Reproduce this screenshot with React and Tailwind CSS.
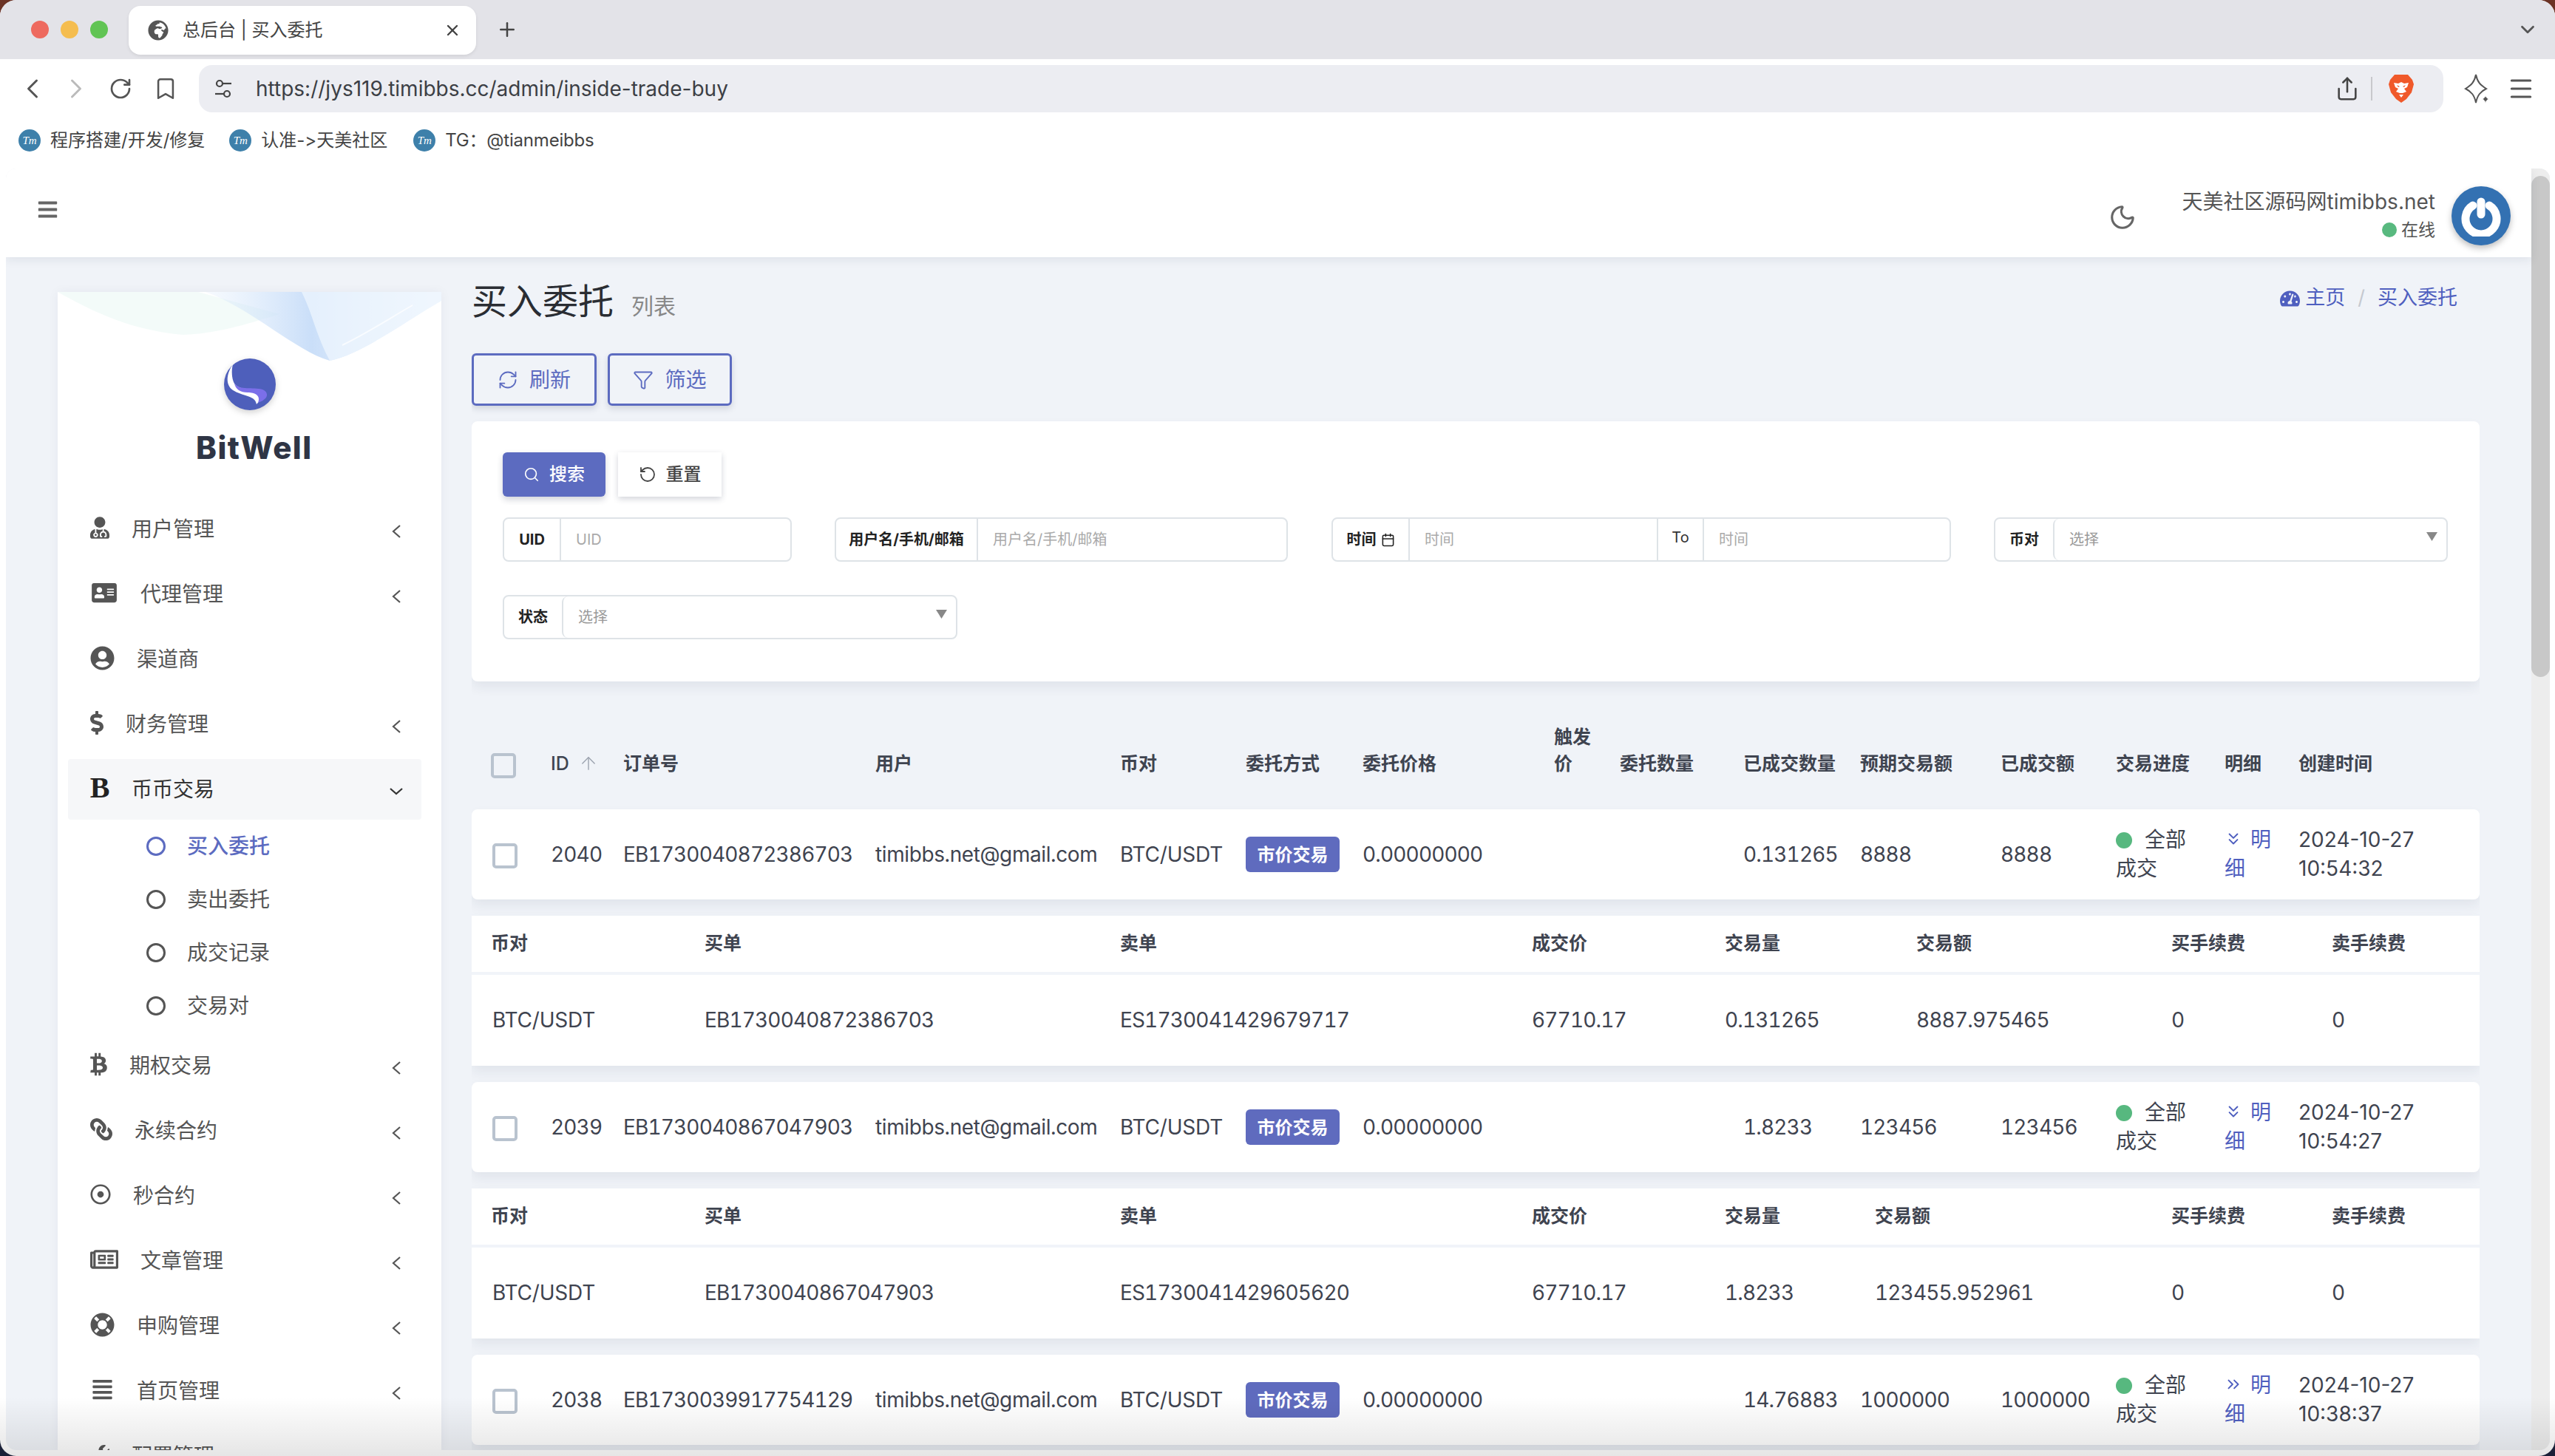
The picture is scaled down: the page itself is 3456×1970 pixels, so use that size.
import React from 'react';
import { ChevronLeft, ChevronRight, ChevronDown, RotateCw, Bookmark, Share, Menu, X, Plus, Moon, RefreshCw, Filter, Search, RotateCcw, Calendar, ArrowUp, ChevronsDown, ChevronsRight } from 'lucide-react';
import { FaUserMd, FaAddressCard, FaUserCircle, FaDollarSign, FaBtc, FaLink, FaRegDotCircle, FaRegNewspaper, FaLifeRing, FaAlignJustify, FaWrench, FaTachometerAlt, FaGlobeAfrica, FaBars } from 'react-icons/fa';

const rowCols = 'grid-cols-[107px_98px_341px_331px_170px_158px_259px_89px_167px_158px_190px_156px_147px_100px_245px]';
const detailA = 'grid-cols-[315px_562px_557px_261px_259px_345px_217px_200px]';
const detailB = 'grid-cols-[315px_562px_557px_261px_203px_401px_217px_200px]';

const orders = [
  { id: '2040', no: 'EB1730040872386703', filled: '0.131265', expect: '8888', total: '8888', date: '2024-10-27', time: '10:54:32', cols: detailA, sell: 'ES1730041429679717', price: '67710.17', vol: '0.131265', amount: '8887.975465' },
  { id: '2039', no: 'EB1730040867047903', filled: '1.8233', expect: '123456', total: '123456', date: '2024-10-27', time: '10:54:27', cols: detailB, sell: 'ES1730041429605620', price: '67710.17', vol: '1.8233', amount: '123455.952961' },
  { id: '2038', no: 'EB1730039917754129', filled: '14.76883', expect: '1000000', total: '1000000', date: '2024-10-27', time: '10:38:37', right: true },
];

const menu = [
  { icon: <FaUserMd className="w-[26px] h-[30px]" />, label: '用户管理', more: true },
  { icon: <FaAddressCard className="w-[38px] h-[30px]" />, label: '代理管理', more: true },
  { icon: <FaUserCircle className="w-[33px] h-[33px]" />, label: '渠道商' },
  { icon: <FaDollarSign className="w-[18px] h-[34px]" />, label: '财务管理', more: true },
];
const menu2 = [
  { icon: <FaBtc className="w-[23px] h-[32px]" />, label: '期权交易' },
  { icon: <FaLink className="w-[30px] h-[30px] -scale-x-100" />, label: '永续合约' },
  { icon: <FaRegDotCircle className="w-[28px] h-[28px]" />, label: '秒合约' },
  { icon: <FaRegNewspaper className="w-[38px] h-[34px]" />, label: '文章管理' },
  { icon: <FaLifeRing className="w-[33px] h-[33px]" />, label: '申购管理' },
  { icon: <FaAlignJustify className="w-[33px] h-[30px]" />, label: '首页管理' },
  { icon: <FaWrench className="w-[26px] h-[30px]" />, label: '配置管理' },
];

function Caret() {
  return (
    <svg width="14" height="20" viewBox="0 0 14 20" fill="none" stroke="#555" strokeWidth="2.2" className="mt-[6px]">
      <path d="M12 2 L3 10 L12 18" />
    </svg>
  );
}

function MenuItem({ icon, label, more, active }) {
  return (
    <div className={`h-[82px] mb-[6px] ml-[14px] mr-[27px] pl-[30px] pr-[27px] flex items-center rounded-[4px] ${active ? 'bg-[#f6f7f9] text-[#333]' : 'text-[#555]'}`}>
      <span className="flex shrink-0 -mt-[4px]">{icon}</span>
      <span className="ml-[30px] text-[28px] leading-[40px] flex-1">{label}</span>
      {active ? (
        <svg width="20" height="12" viewBox="0 0 20 12" fill="none" stroke="#333" strokeWidth="2.2" className="mt-[6px] -mr-[3px]"><path d="M2 2 L10 9 L18 2" /></svg>
      ) : more !== false ? <Caret /> : null}
    </div>
  );
}

function SubItem({ label, active }) {
  return (
    <div className={`h-[72px] flex items-center pl-[120px] text-[28px] ${active ? 'text-[#5c6bc0] font-medium' : 'text-[#555]'}`}>
      <span className={`w-[26px] h-[26px] rounded-full border-[3px] ${active ? 'border-[#5c6bc0]' : 'border-[#555]'}`} />
      <span className="ml-[29px]">{label}</span>
    </div>
  );
}

function BmIcon() {
  return (
    <span className="w-[30px] h-[30px] rounded-full bg-[#3e80aa] text-white text-[15px] italic font-['Liberation_Serif',serif] flex items-center justify-center">Tm</span>
  );
}

function Group({ label, w, labelW, children, className = '' }) {
  return (
    <div className={`flex h-[60px] border-2 border-[#dee3e7] rounded-[8px] ${className}`} style={{ width: w }}>
      <div className="flex items-center justify-center shrink-0 text-[20px] font-bold text-[#222]" style={{ width: labelW }}>{label}</div>
      {children}
    </div>
  );
}

function TextField({ placeholder, className = '' }) {
  return (
    <input readOnly placeholder={placeholder} className={`min-w-0 flex-1 border-l-2 border-[#dee3e7] pl-[20px] text-[20px] outline-none placeholder:text-[#aaa] bg-transparent ${className}`} />
  );
}

function SelectField() {
  return (
    <div className="flex-1 flex items-center justify-between rounded-[8px] border-l-2 border-[#dee3e7] pl-[20px] pr-[12px] text-[20px] text-[#999]">
      <span>选择</span>
      <svg width="15" height="12" viewBox="0 0 15 12" className="-mt-[8px]"><path d="M0 0 H15 L7.5 12 Z" fill="#888" /></svg>
    </div>
  );
}

function CheckBox({ className = '' }) {
  return <span className={`block w-[34px] h-[34px] rounded-[5px] border-[4px] border-[#b9c3cf] ${className}`} />;
}

function OrderRow({ o }) {
  return (
    <div className={`grid ${rowCols} h-[122px] items-center bg-white rounded-[8px] shadow-[0_8px_16px_rgba(30,40,70,0.07)] text-[28px] leading-[39px] text-[#3f4450] whitespace-nowrap tabular-nums tracking-[-0.85px]`}>
      <div className="pl-[28px] pt-[3px]"><CheckBox /></div>
      <div>{o.id}</div>
      <div>{o.no}</div>
      <div className="tracking-[-0.4px]">timibbs.net@gmail.com</div>
      <div className="tracking-[-0.2px]">BTC/USDT</div>
      <div><span className="inline-flex items-center justify-center w-[127px] h-[48px] rounded-[6px] bg-[#5f6bbe] text-white text-[24px] font-bold tracking-normal">市价交易</span></div>
      <div>0.00000000</div>
      <div />
      <div />
      <div>{o.filled}</div>
      <div>{o.expect}</div>
      <div>{o.total}</div>
      <div className="w-[115px] whitespace-normal tracking-normal"><span className="inline-block w-[22px] h-[22px] rounded-full bg-[#57b87f] mr-[17px] align-[-2px]" />全部成交</div>
      <div className="w-[70px] whitespace-normal text-[#4f5fbf] tracking-normal">
        {o.right
          ? <ChevronsRight size={26} strokeWidth={1.8} className="inline-block mr-[10px] -ml-[1px] align-[-2px]" />
          : <ChevronsDown size={26} strokeWidth={1.8} className="inline-block mr-[10px] -ml-[1px] align-[-2px]" />}
        明细
      </div>
      <div className="normal-nums tracking-normal">{o.date}<br />{o.time}</div>
    </div>
  );
}

function DetailCard({ o }) {
  return (
    <div className="bg-white shadow-[0_8px_16px_rgba(30,40,70,0.07)] text-[#3f4450] whitespace-nowrap">
      <div className={`grid ${o.cols} h-[76px] items-center text-[25px] font-semibold`}>
        <div className="pl-[26px]">币对</div>
        <div>买单</div>
        <div>卖单</div>
        <div>成交价</div>
        <div>交易量</div>
        <div>交易额</div>
        <div>买手续费</div>
        <div>卖手续费</div>
      </div>
      <div className={`grid ${o.cols} h-[127px] pb-[2px] items-center border-t-4 border-[#f1f4f9] text-[28px] tabular-nums tracking-[-0.85px]`}>
        <div className="pl-[28px] tracking-[-0.2px]">BTC/USDT</div>
        <div>{o.no}</div>
        <div>{o.sell}</div>
        <div>{o.price}</div>
        <div>{o.vol}</div>
        <div>{o.amount}</div>
        <div>0</div>
        <div>0</div>
      </div>
    </div>
  );
}

function Sidebar() {
  return (
    <aside className="w-[519px] shrink-0 ml-[70px] mt-[47px] bg-white shadow-[0_0_14px_rgba(30,40,70,0.05)] overflow-hidden">
      <div className="relative h-[280px]">
        <svg width="519" height="100" viewBox="0 0 519 100" className="absolute top-0 left-0">
          <defs>
            <linearGradient id="waveBlue" x1="0" y1="0" x2="1" y2="0">
              <stop offset="0" stopColor="#d5e6fa" stopOpacity="0.2" />
              <stop offset="0.45" stopColor="#c4dbf8" stopOpacity="0.9" />
              <stop offset="1" stopColor="#dfecfb" stopOpacity="0.35" />
            </linearGradient>
          </defs>
          <path d="M0 0 C50 28 100 52 170 58 C220 56 260 42 300 30 L190 0 Z" fill="#eefaf6" opacity="0.7" />
          <path d="M200 0 C262 22 322 80 368 93 C410 85 470 40 519 12 L519 0 Z" fill="url(#waveBlue)" />
          <path d="M330 0 C345 30 350 60 368 93 C410 85 470 40 519 12 L519 0 Z" fill="#eef5fd" opacity="0.75" />
          <path d="M385 72 C420 55 450 35 480 18" stroke="#ffffff" strokeWidth="2" fill="none" opacity="0.7" />
        </svg>
        <svg width="70" height="70" viewBox="0 0 70 70" className="absolute left-[225px] top-[90px] drop-shadow-[0_3px_4px_rgba(0,0,0,0.18)]">
          <circle cx="35" cy="35" r="35" fill="#4e5fbb" />
          <path d="M12 8 C2 22 2 38 14 44 C28 52 42 50 44 62 C50 56 52 52 48 48 C38 40 22 44 14 34 C10 26 10 16 12 8 Z" fill="#ffffff" />
          <path d="M14 34 C22 44 38 38 52 42 C58 44 60 50 56 54 C52 58 50 58 46 60 C50 50 42 46 32 46 C22 46 16 42 14 34 Z" fill="#7b6fe9" />
        </svg>
        <div className="absolute left-[187px] top-[186px] text-[42px] leading-[50px] font-extrabold text-[#2f3545] tracking-[1.5px]">BitWell</div>
      </div>
      {menu.map((m) => <MenuItem key={m.label} {...m} more={m.more === true} />)}
      <MenuItem icon={<span className="w-[26px] h-[30px] flex items-center justify-center text-[40px] font-bold font-['Liberation_Serif',serif] text-[#222]">B</span>} label="币币交易" active />
      <div className="-mt-[6px] mb-[4px]">
        <SubItem label="买入委托" active />
        <SubItem label="卖出委托" />
        <SubItem label="成交记录" />
        <SubItem label="交易对" />
      </div>
      {menu2.map((m) => <MenuItem key={m.label} {...m} more />)}
    </aside>
  );
}

function Main() {
  return (
    <main className="w-[2716px] shrink-0 ml-[41px] overflow-hidden">
      <div className="flex items-center justify-between pt-[30px]">
        <div className="flex items-end">
          <h1 className="text-[48px] leading-[60px] text-[#2a2d33]">买入委托</h1>
          <span className="ml-[24px] mb-[4px] text-[30px] leading-[40px] text-[#888]">列表</span>
        </div>
        <div className="flex items-center pr-[30px] -mt-[9px] text-[27px] text-[#4f5fbf]">
          <FaTachometerAlt className="w-[27px] h-[24px]" />
          <span className="ml-[7px]">主页</span>
          <span className="mx-[17px] text-[#c5c9d0]">/</span>
          <span>买入委托</span>
        </div>
      </div>
      <div className="flex gap-[15px] mt-[40px]">
        <button className="flex items-center justify-center gap-[15px] w-[169px] h-[71px] border-[3px] border-[#5c6bc0] rounded-[6px] text-[28px] text-[#5c6bc0] shadow-[0_4px_8px_rgba(30,40,70,0.15)]"><RefreshCw size={28} strokeWidth={1.6} />刷新</button>
        <button className="flex items-center justify-center gap-[15px] w-[168px] h-[71px] border-[3px] border-[#5c6bc0] rounded-[6px] text-[28px] text-[#5c6bc0] shadow-[0_4px_8px_rgba(30,40,70,0.15)]"><Filter size={28} strokeWidth={1.6} />筛选</button>
      </div>
      <section className="mt-[21px] h-[352px] bg-white rounded-[8px] pl-[42px] pt-[42px] shadow-[0_8px_16px_rgba(30,40,70,0.07)]">
        <div className="flex gap-[17px]">
          <button className="flex items-center justify-center gap-[13px] w-[139px] h-[60px] rounded-[6px] bg-[#5c6bc0] text-white text-[24px] font-medium shadow-[0_4px_8px_rgba(30,40,70,0.2)]"><Search size={22} strokeWidth={1.8} />搜索</button>
          <button className="flex items-center justify-center gap-[13px] w-[140px] h-[60px] bg-white text-[#444] text-[24px] font-medium shadow-[0_3px_8px_rgba(30,40,70,0.2)]"><RotateCcw size={24} strokeWidth={1.8} />重置</button>
        </div>
        <div className="flex mt-[28px]">
          <Group label="UID" w={391} labelW={75}><TextField placeholder="UID" /></Group>
          <Group label="用户名/手机/邮箱" w={613} labelW={190} className="ml-[58px]"><TextField placeholder="用户名/手机/邮箱" /></Group>
          <Group label={<span className="flex items-center gap-[6px]">时间<Calendar size={19} strokeWidth={2} /></span>} w={838} labelW={102} className="ml-[59px]">
            <TextField placeholder="时间" className="w-[336px] flex-none" />
            <div className="w-[62px] shrink-0 border-l-2 border-[#dee3e7] text-center text-[20px] leading-[50px] text-[#333]">To</div>
            <TextField placeholder="时间" />
          </Group>
          <Group label="币对" w={614} labelW={78} className="ml-[58px]"><SelectField /></Group>
        </div>
        <div className="mt-[45px]">
          <Group label="状态" w={615} labelW={78}><SelectField /></Group>
        </div>
      </section>
      <div className={`grid ${rowCols} h-[173px] items-end pb-[44px] text-[25px] leading-[36px] font-semibold text-[#3f4450]`}>
        <div className="pl-[26px] -mb-[2px]"><CheckBox /></div>
        <div className="flex items-center font-medium whitespace-nowrap">ID<ArrowUp size={28} strokeWidth={1.2} className="ml-[12px] text-[#9ca3af]" /></div>
        <div>订单号</div>
        <div>用户</div>
        <div>币对</div>
        <div>委托方式</div>
        <div>委托价格</div>
        <div className="w-[50px]">触发价</div>
        <div>委托数量</div>
        <div>已成交数量</div>
        <div>预期交易额</div>
        <div>已成交额</div>
        <div>交易进度</div>
        <div>明细</div>
        <div>创建时间</div>
      </div>
      <div className="flex flex-col gap-[22px]">
        {orders.map((o) => (
          <React.Fragment key={o.id}>
            <OrderRow o={o} />
            {o.sell && <DetailCard o={o} />}
          </React.Fragment>
        ))}
      </div>
    </main>
  );
}

function BrowserChrome() {
  return (
    <>
      <div className="h-[80px] shrink-0 bg-[#e3e3e8] flex items-center relative">
        <span className="w-[24px] h-[24px] rounded-full bg-[#ee6a5f] ml-[42px]" />
        <span className="w-[24px] h-[24px] rounded-full bg-[#f5bd4f] ml-[16px]" />
        <span className="w-[24px] h-[24px] rounded-full bg-[#61c454] ml-[16px]" />
        <div className="ml-[28px] w-[470px] h-[66px] mb-[-2px] bg-white rounded-[16px] flex items-center pl-[26px] pr-[20px] shadow-[0_2px_4px_rgba(0,0,0,0.08)] text-[#444]">
          <FaGlobeAfrica className="w-[28px] h-[28px] text-[#555]" />
          <span className="ml-[19px] text-[24px] flex-1 whitespace-nowrap">总后台 | 买入委托</span>
          <X size={24} strokeWidth={2.4} />
        </div>
        <Plus size={30} strokeWidth={2} className="ml-[27px] text-[#444]" />
        <ChevronDown size={30} strokeWidth={2.2} className="ml-auto mr-[22px] text-[#555]" />
      </div>
      <div className="h-[80px] shrink-0 bg-white flex items-center text-[#555]">
        <ChevronLeft size={44} strokeWidth={1.6} className="ml-[22px]" />
        <ChevronRight size={44} strokeWidth={1.6} className="ml-[15px] text-[#bbb]" />
        <RotateCw size={32} strokeWidth={2} className="ml-[22px]" />
        <Bookmark size={34} strokeWidth={1.8} className="ml-[28px]" />
        <div className="ml-[28px] w-[3036px] h-[64px] rounded-[18px] bg-[#ecedf2] flex items-center pl-[20px] pr-[40px]">
          <svg width="26" height="28" viewBox="0 0 26 28" fill="none" stroke="#444" strokeWidth="2.2">
            <circle cx="8" cy="7" r="4" /><path d="M12 7 H24" />
            <circle cx="18" cy="21" r="4" /><path d="M2 21 H14" />
          </svg>
          <span className="ml-[31px] text-[28px] text-[#3c3f45] flex-1">https://jys119.timibbs.cc/admin/inside-trade-buy</span>
          <Share size={34} strokeWidth={1.8} className="text-[#444]" />
          <span className="ml-[15px] w-[2px] h-[32px] bg-[#c8c8cc]" />
          <svg width="34" height="38" viewBox="0 0 34 38" className="ml-[22px]">
            <path d="M8 0 H26 L32 7 L34 13 L31 24 L24 33 L17 38 L10 33 L3 24 L0 13 L2 7 Z" fill="#f0592a" />
            <path d="M7 11 L13 12 L17 10 L21 12 L27 11 L25 17 L21 19 L24 23 L19 25 H15 L10 23 L13 19 L9 17 Z" fill="#ffffff" />
            <path d="M11 14 L15 16 L13 17 Z M23 14 L19 16 L21 17 Z" fill="#f0592a" />
            <path d="M14 27 H20 L17 31 Z" fill="#ffffff" />
          </svg>
        </div>
        <svg width="36" height="42" viewBox="0 0 36 42" className="ml-[28px]" fill="none" stroke="#555" strokeWidth="2">
          <path d="M16 2 C18 12 22 16 30 21 C22 25 18 30 16 40 C14 30 10 25 2 21 C10 16 14 12 16 2 Z" />
          <path d="M29 30 C30 33 31 34 34 35 C31 36 30 37 29 41 C28 37 27 36 24 35 C27 34 28 33 29 30 Z" fill="#555" stroke="#fff" strokeWidth="1" />
        </svg>
        <Menu size={38} strokeWidth={1.9} className="ml-[22px]" />
      </div>
      <div className="h-[68px] shrink-0 bg-white flex items-center text-[24px] text-[#444] pb-[8px]">
        <span className="ml-[25px]"><BmIcon /></span>
        <span className="ml-[13px]">程序搭建/开发/修复</span>
        <span className="ml-[33px]"><BmIcon /></span>
        <span className="ml-[13px] [font-feature-settings:'calt'_0]">认准-&gt;天美社区</span>
        <span className="ml-[35px]"><BmIcon /></span>
        <span className="ml-[13px] tracking-[-0.2px]">TG：@tianmeibbs</span>
      </div>
    </>
  );
}

export default function App() {
  return (
    <div className="relative w-[3456px] h-[1970px] overflow-hidden bg-gradient-to-b from-[#6b3325] to-[#1a2038] font-['Inter','Noto_Sans_CJK_SC',sans-serif]">
      <div className="relative flex flex-col h-full rounded-[22px] overflow-hidden bg-white">
        <BrowserChrome />
        <div className="flex-1 min-h-0 flex ml-[8px] mr-[7px] mb-[8px] rounded-[14px] overflow-hidden bg-[#f0f3f8]">
          <div className="w-[3416px] shrink-0 flex flex-col">
            <header className="h-[120px] shrink-0 bg-white flex items-center shadow-[0_4px_12px_rgba(30,40,70,0.08)] relative">
              <FaBars className="ml-[42px] -mt-[10px] w-[29px] h-[29px] text-[#666]" />
              <Moon size={38} strokeWidth={2} className="ml-auto mt-[12px] text-[#666]" />
              <div className="ml-[62px] mt-[6px] flex flex-col items-end text-[#555]">
                <div className="text-[28px] leading-[40px]">天美社区源码网timibbs.net</div>
                <div className="flex items-center text-[23px] leading-[36px]"><span className="w-[20px] h-[20px] rounded-full bg-[#58b97f] mr-[6px]" />在线</div>
              </div>
              <div className="ml-[22px] mr-[28px] mt-[8px] w-[80px] h-[80px] rounded-full bg-[#3371b2] shadow-[0_4px_8px_rgba(0,0,0,0.25)] flex items-center justify-center">
                <svg width="56" height="56" viewBox="0 0 56 56" fill="none" stroke="#fff" strokeWidth="11" strokeLinecap="round">
                  <path d="M17 14 A21 21 0 1 0 39 14" />
                  <path d="M28 9 V26" />
                </svg>
              </div>
            </header>
            <div className="flex-1 min-h-0 flex overflow-hidden">
              <Sidebar />
              <Main />
            </div>
          </div>
          <div className="flex-1 bg-[#ededed] pt-[10px]">
            <div className="w-full h-[678px] rounded-full bg-[#c8c8c8]" />
          </div>
        </div>
        <div className="absolute inset-x-0 bottom-0 h-[80px] bg-gradient-to-b from-transparent to-black/10 pointer-events-none" />
      </div>
    </div>
  );
}
